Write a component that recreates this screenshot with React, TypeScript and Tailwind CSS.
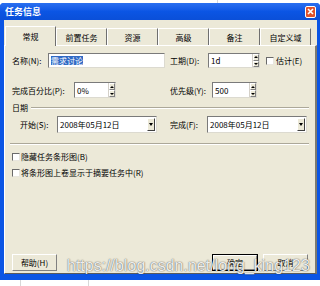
import React from "react";

const F = { fontFamily: '"Noto Sans CJK SC", "Noto Sans", sans-serif' };

function Spinner() {
  return (
    <div className="flex flex-col w-[7px] h-full border-l border-[#d4d0c8]">
      <div className="flex-1 bg-[#ece9d8] border border-t-white border-l-white border-r-[#808080] border-b-[#808080] flex items-center justify-center">
        <div className="w-0 h-0 border-l-[2px] border-r-[2px] border-b-[2px] border-l-transparent border-r-transparent border-b-black" />
      </div>
      <div className="flex-1 bg-[#ece9d8] border border-t-white border-l-white border-r-[#808080] border-b-[#808080] flex items-center justify-center">
        <div className="w-0 h-0 border-l-[2px] border-r-[2px] border-t-[2px] border-l-transparent border-r-transparent border-t-black" />
      </div>
    </div>
  );
}

function Field({ w, h, children, spin, drop }: { w: string; h: string; children?: React.ReactNode; spin?: boolean; drop?: boolean }) {
  return (
    <div className={`${w} ${h} bg-white border border-t-[#7a7a7a] border-l-[#7a7a7a] border-r-[#dcdad0] border-b-[#dcdad0] flex items-stretch`}>
      <div className="flex-1 flex items-center pl-[2px] text-[8px] leading-[9px] text-black overflow-hidden whitespace-nowrap">{children}</div>
      {spin && <Spinner />}
      {drop && (
        <div className="w-[8px] my-[1px] mr-[1px] bg-[#ece9d8] border border-t-white border-l-white border-r-[#404040] border-b-[#404040] flex items-center justify-center">
          <div className="w-0 h-0 border-l-[2px] border-r-[2px] border-t-[3px] border-l-transparent border-r-transparent border-t-black" />
        </div>
      )}
    </div>
  );
}

function Check() {
  return <div className="w-[8px] h-[8px] bg-white border border-t-[#6a6a6a] border-l-[#6a6a6a] border-r-[#e8e6de] border-b-[#e8e6de] shrink-0" />;
}

function Btn({ children, def, w }: { children: React.ReactNode; def?: boolean; w: string }) {
  return (
    <div className={`${w} h-[17px] ${def ? "border border-black" : ""}`}>
      <div className="w-full h-full bg-[#ece9d8] border border-t-white border-l-white border-r-[#808080] border-b-[#808080] flex items-center justify-center text-[8px] leading-[9px] text-black">
        {children}
      </div>
    </div>
  );
}

export default function App() {
  const tabs = ["常规", "前置任务", "资源", "高级", "备注", "自定义域"];
  return (
    <div className="w-[320px] h-[286px] bg-white relative overflow-hidden" style={F}>
      <div className="absolute left-[20px] top-[280px] w-px h-[6px] bg-[#d8d8d8]" />
      <div className="absolute left-[88px] top-[280px] w-px h-[6px] bg-[#d8d8d8]" />
      <div className="absolute left-[217px] top-0 w-px h-[3px] bg-[#d8d8d8]" />
      <div className="mt-[3px] w-[320px] h-[277px] flex flex-col bg-[#0b55e4] rounded-t-[4px]">
        <div className="h-[17px] flex items-center justify-between pl-[5px] pr-[4px] bg-gradient-to-b from-[#2a6ff0] via-[#0b55e4] to-[#0a4fd8] rounded-t-[4px]">
          <span className="text-[9px] leading-[10px] font-bold text-white">任务信息</span>
          <div className="w-[11px] h-[12px] rounded-[2px] border border-white bg-[#e0522c] flex items-center justify-center">
            <svg width="7" height="7" viewBox="0 0 7 7">
              <path d="M1 1 L6 6 M6 1 L1 6" stroke="white" strokeWidth="1.6" />
            </svg>
          </div>
        </div>
        <div className="flex-1 pl-[4px] pr-[3px] pb-[6px] flex flex-col">
          <div className="flex-1 bg-[#ece9d8] flex flex-col">
            <div className="flex items-end pt-[5px] pl-[1px] h-[25px] relative z-10">
              {tabs.map((t, i) => (
                <div
                  key={t}
                  className={`w-[51px] ${i === 0 ? "h-[20px] mb-[-1px] bg-[#ece9d8]" : "h-[17px]"} border-t border-l border-t-white border-l-white border-r border-r-[#6f6f6f] flex items-center justify-center text-[8px] leading-[9px] text-black`}
                >
                  {t}
                </div>
              ))}
            </div>
            <div className="flex-1 w-[313px] border-t border-l border-t-white border-l-white border-r-2 border-r-[#7c7a70] border-b border-b-[#5a5a5a] flex flex-col">
              <div className="flex items-center mt-[7px] h-[15px] pl-[7px]">
                <span className="w-[36px] text-[8px] leading-[9px]">名称(N):</span>
                <Field w="w-[117px]" h="h-[15px]">
                  <span className="bg-[#316ac5] text-white px-[0px]">需求讨论</span>
                </Field>
                <span className="ml-[5px] w-[38px] text-[8px] leading-[9px]">工期(D):</span>
                <Field w="w-[52px]" h="h-[15px]" spin>1d</Field>
                <div className="ml-[6px]"><Check /></div>
                <span className="ml-[2px] text-[8px] leading-[9px]">估计(E)</span>
              </div>
              <div className="flex items-center mt-[14px] h-[16px] pl-[7px]">
                <span className="w-[62px] text-[8px] leading-[9px]">完成百分比(P):</span>
                <Field w="w-[42px]" h="h-[16px]" spin>0%</Field>
                <span className="ml-[54px] w-[42px] text-[8px] leading-[9px]">优先级(Y):</span>
                <Field w="w-[45px]" h="h-[16px]" spin>500</Field>
              </div>
              <div className="flex items-center mt-[4px] h-[10px] pl-[7px] pr-[6px]">
                <span className="text-[8px] leading-[9px]">日期</span>
                <div className="flex-1 ml-[3px] mt-[2px] h-[2px] border-t border-t-[#aca899] border-b border-b-white" />
              </div>
              <div className="flex items-center mt-[4px] h-[17px] pl-[15px]">
                <span className="w-[37px] text-[8px] leading-[9px]">开始(S):</span>
                <Field w="w-[100px]" h="h-[17px]" drop>2008年05月12日</Field>
                <span className="ml-[13px] w-[37px] text-[8px] leading-[9px]">完成(F):</span>
                <Field w="w-[100px]" h="h-[17px]" drop>2008年05月12日</Field>
              </div>
              <div className="mt-[10px] ml-[5px] mr-[6px] h-[2px] border-t border-t-[#aca899] border-b border-b-white" />
              <div className="flex items-center mt-[7px] h-[9px] pl-[7px]">
                <Check />
                <span className="ml-[1px] text-[8px] leading-[9px]">隐藏任务条形图(B)</span>
              </div>
              <div className="flex items-center mt-[7px] h-[9px] pl-[7px]">
                <Check />
                <span className="ml-[1px] text-[8px] leading-[9px]">将条形图上卷显示于摘要任务中(R)</span>
              </div>
              <div className="mt-auto mb-[2px] flex items-center pl-[7px] pr-[7px]">
                <Btn w="w-[45px]">帮助(H)</Btn>
                <div className="flex-1" />
                <Btn w="w-[46px]" def>确定</Btn>
                <div className="ml-[5px]"><Btn w="w-[45px]">取消</Btn></div>
              </div>
            </div>
          </div>
        </div>
      </div>
      <div
        className="absolute left-[67px] top-[258px] text-[16px] leading-[16px] text-white/90 whitespace-nowrap [text-shadow:0_0_1px_rgba(0,0,0,0.7),0_0_2px_rgba(0,0,0,0.25)]"
        style={{ fontFamily: '"Liberation Sans", Arial, sans-serif' }}
      >
        https://blog.csdn.net/long_king123
      </div>
    </div>
  );
}
